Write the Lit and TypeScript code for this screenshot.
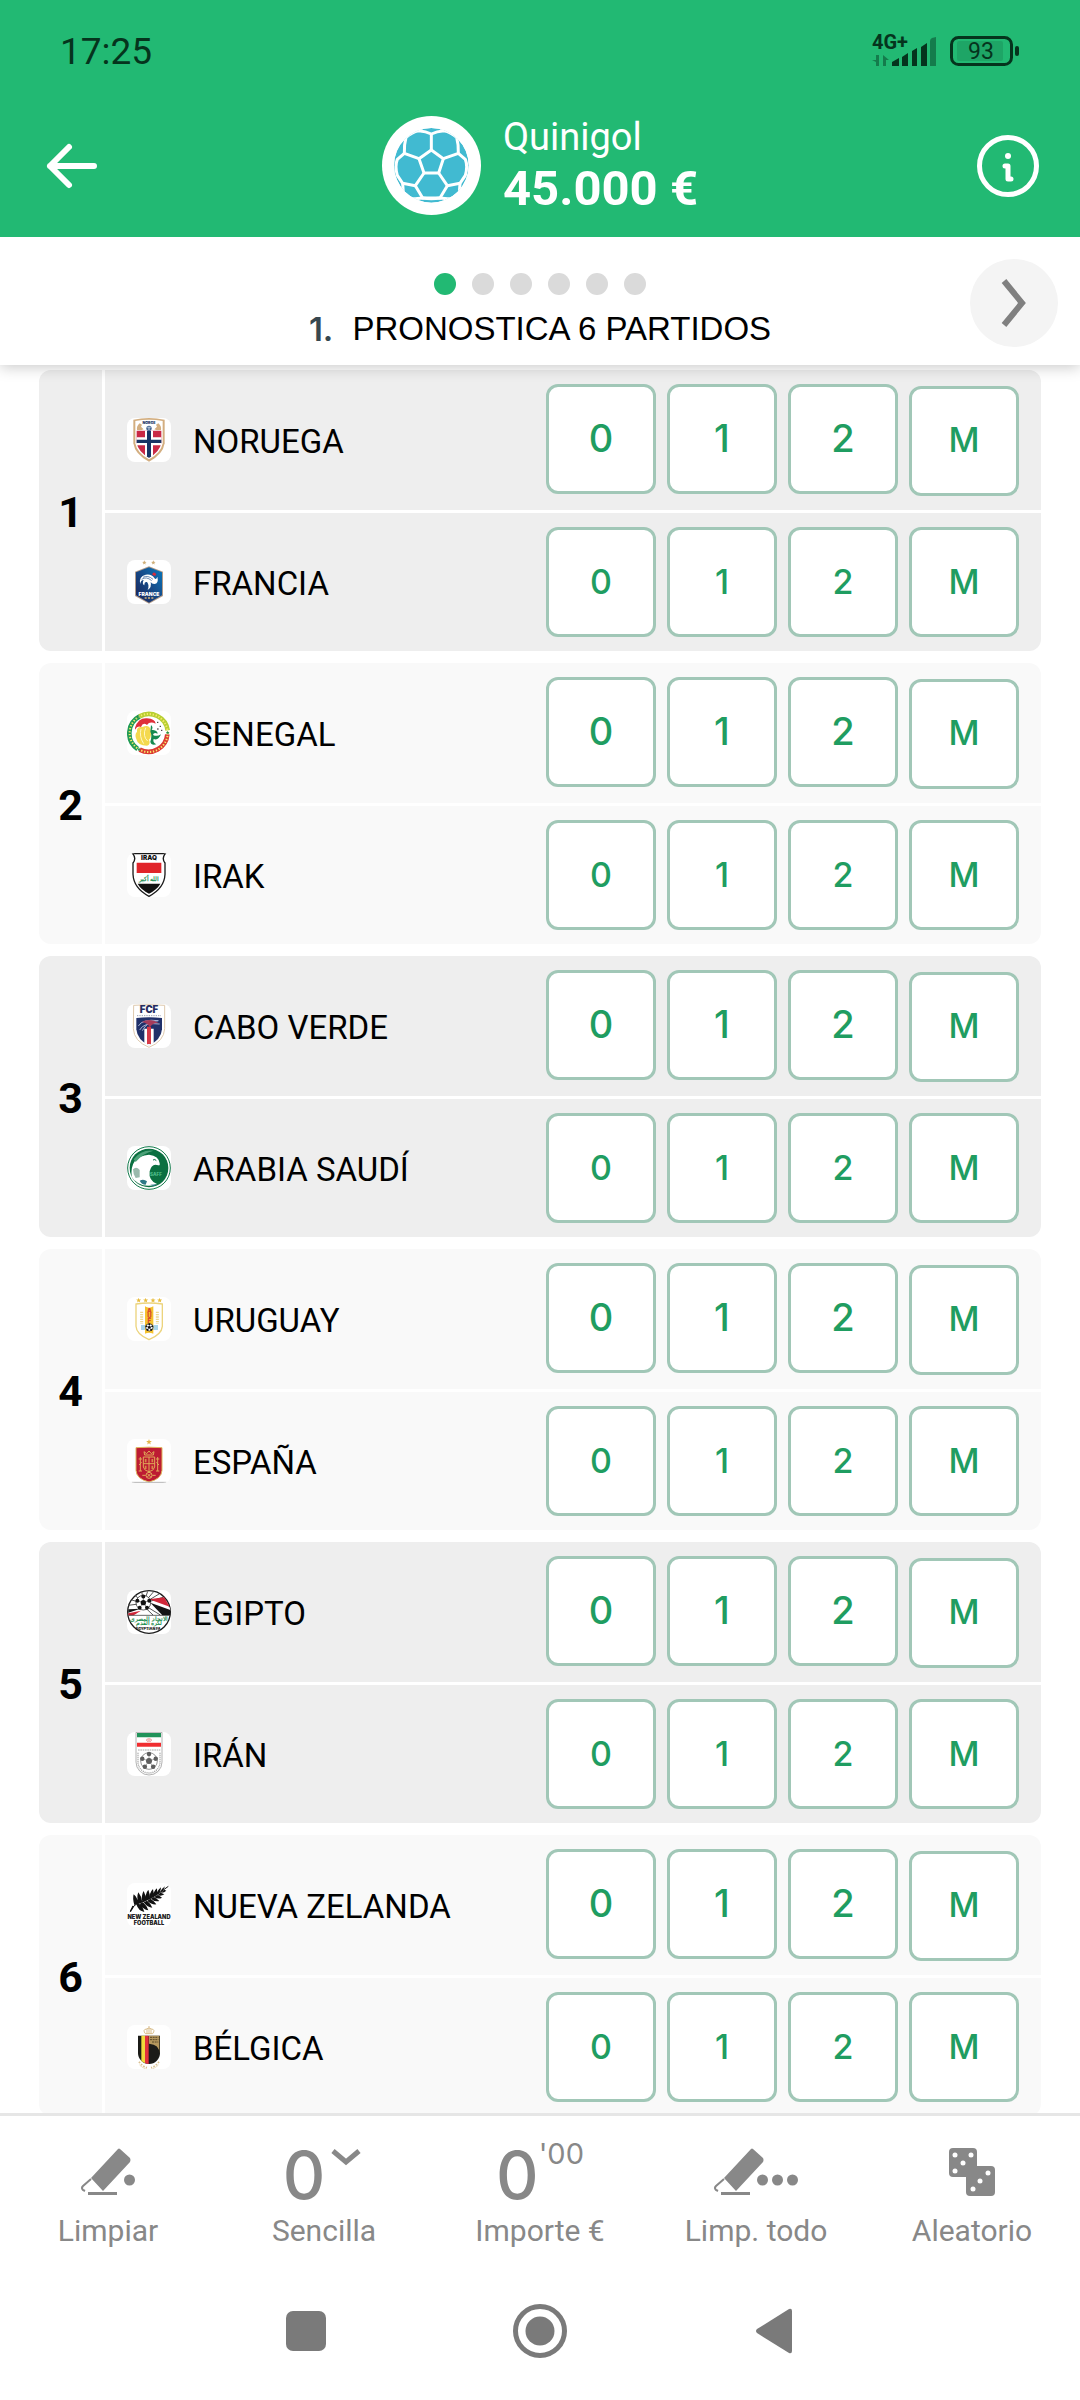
import { LitElement, html, svg, css, nothing, type SVGTemplateResult } from 'lit';
import { customElement, property, state } from 'lit/decorators.js';
import { classMap } from 'lit/directives/class-map.js';

interface Team {
  name: string;
  crest: string;
}

const MATCHES: [Team, Team][] = [
  [{ name: 'NORUEGA', crest: 'norway' }, { name: 'FRANCIA', crest: 'france' }],
  [{ name: 'SENEGAL', crest: 'senegal' }, { name: 'IRAK', crest: 'iraq' }],
  [{ name: 'CABO VERDE', crest: 'capeverde' }, { name: 'ARABIA SAUDÍ', crest: 'saudi' }],
  [{ name: 'URUGUAY', crest: 'uruguay' }, { name: 'ESPAÑA', crest: 'spain' }],
  [{ name: 'EGIPTO', crest: 'egypt' }, { name: 'IRÁN', crest: 'iran' }],
  [{ name: 'NUEVA ZELANDA', crest: 'newzealand' }, { name: 'BÉLGICA', crest: 'belgium' }],
];

const GOALS = ['0', '1', '2', 'M'];

// Five-pointed star centred on x, y
function star(x: number, y: number, r: number, fill: string): SVGTemplateResult {
  const points = Array.from({ length: 10 }, (_, i) => {
    const radius = i % 2 ? r * 0.42 : r;
    const angle = (Math.PI / 5) * i - Math.PI / 2;
    return `${(x + radius * Math.cos(angle)).toFixed(1)},${(y + radius * Math.sin(angle)).toFixed(1)}`;
  }).join(' ');
  return svg`<polygon points=${points} fill=${fill} />`;
}

// Small black and white football
function football(x: number, y: number, r: number, dark = '#111'): SVGTemplateResult {
  const spots = [0, 1, 2, 3, 4].map((i) => {
    const angle = ((Math.PI * 2) / 5) * i - Math.PI / 2;
    return [x + r * 0.85 * Math.cos(angle), y + r * 0.85 * Math.sin(angle)];
  });
  return svg`
    <circle cx=${x} cy=${y} r=${r} fill="#fff" stroke=${dark} stroke-width="2" />
    ${spots.map(([sx, sy]) => svg`
      <line x1=${x} y1=${y} x2=${sx} y2=${sy} stroke=${dark} stroke-width="1.5" />
      <circle cx=${sx} cy=${sy} r=${r * 0.27} fill=${dark} />`)}
    <circle cx=${x} cy=${y} r=${r * 0.36} fill=${dark} />
  `;
}

const CRESTS: Record<string, SVGTemplateResult> = {
  norway: svg`
    <path d="M19 5 Q66 -5 113 5 V76 Q108 110 66 131 Q24 110 19 76Z" fill="#d3ae80" />
    <path d="M25 9 Q66 1 107 9 V76 Q102 105 66 124 Q30 105 25 76Z" fill="#fff" />
    <path d="M29 38 H103 V75 Q98 102 66 119 Q34 102 29 75Z" fill="#c92845" />
    <path d="M54 38 H78 V113 L66 119 L54 113Z M29 58 H103 V82 H29Z" fill="#fff" />
    <path d="M60 38 H72 V116 L66 119 L60 116Z M29 65 H103 V75 H29Z" fill="#173465" />
    <path d="M30 36 Q28 24 38 16 L45 20 L42 26 L50 34 L42 37Z M102 36 Q104 24 94 16 L87 20 L90 26 L82 34 L90 37Z" fill="#d3ae80" />
    <text x="66" y="19" font-size="11" font-weight="900" text-anchor="middle" fill="#173465">NORGE</text>
    <circle cx="66" cy="31" r="8" fill="#3d5f8e" />
    <path d="M59 29 H73 M63 25 L69 37 M69 25 L63 37" stroke="#dce5ee" stroke-width="1.5" />`,
  france: svg`
    <defs>
      <linearGradient id="fr" x1="1" y1="0" x2="0" y2="1">
        <stop offset="0" stop-color="#0879bd" />
        <stop offset=".5" stop-color="#174987" />
        <stop offset="1" stop-color="#1b2154" />
      </linearGradient>
    </defs>
    ${star(52, 8, 7, '#cfae78')}${star(79, 8, 7, '#cfae78')}
    <path d="M66 19 L108 35 V108 L66 131 L24 108 V35Z" fill="#b39b89" />
    <path d="M66 22 L105 37 V106 L66 128 L27 106 V37Z" fill="url(#fr)" />
    <path d="M40 72 Q34 50 56 44 Q74 41 82 54 Q87 62 91 50 Q96 70 82 72 Q74 72 71 66 Q75 82 62 90 Q68 75 60 66 Q52 64 52 76 Q44 72 50 60 Q41 60 40 72Z" fill="#fff" />
    <path d="M44 58 Q58 48 74 62 M48 52 Q62 44 78 58" fill="none" stroke="#27558f" stroke-width="2" />
    <path d="M76 45 Q76 36 83 38 L88 42 L84 48Z" fill="#d62c3c" />
    <text x="66" y="107" font-size="15" font-weight="900" text-anchor="middle" fill="#fff">FRANCE</text>
    <path d="M53 114 H79" stroke="#cfae78" stroke-width="5" stroke-dasharray="6 4" />`,
  senegal: svg`
    <circle cx="65" cy="66" r="63" fill="#fff" />
    <path d="M32 114 A57 57 0 0 1 38 16" fill="none" stroke="#219b55" stroke-width="14" />
    <path d="M38 16 A57 57 0 0 1 122 58" fill="none" stroke="#b7cf32" stroke-width="14" />
    <path d="M121 70 A57 57 0 0 1 38 116" fill="none" stroke="#dc3a32" stroke-width="14" />
    <circle cx="65" cy="66" r="57" fill="none" stroke="#f6e96b" stroke-width="6" stroke-dasharray="4 5" />
    ${star(32, 18, 6, '#218f4d')}${star(122, 65, 6, '#218f4d')}${star(36, 115, 6, '#218f4d')}
    <path d="M24 50 Q34 20 60 22 Q85 24 86 38 Q68 30 60 42 Q48 32 42 48 Q32 42 24 56Z" fill="#df303a" />
    <path d="M30 62 Q28 46 46 48 Q66 40 70 54 Q76 76 66 86 Q72 100 60 104 Q32 104 28 84 Q22 70 30 62Z" fill="#f4d94e" />
    <path d="M42 54 Q36 76 50 98 M56 50 Q46 76 62 90" fill="none" stroke="#fff6c5" stroke-width="3" />
    <path d="M72 42 Q80 50 74 56 Q92 58 92 68 Q80 62 78 72 Q90 78 102 70 Q94 90 80 84 Q76 94 88 100 Q72 104 70 92 Q76 72 70 62Z" fill="#168a50" />
    <path d="M90 34 H94 M98 46 H102 M90 54 H95 M102 58 H106" stroke="#222" stroke-width="3" />`,
  iraq: svg`
    <path d="M17 2 H115 Q103 16 114 30 V64 Q112 106 66 130 Q20 106 18 64 V30 Q29 16 17 2Z" fill="#fff" stroke="#1b1b1b" stroke-width="4" />
    <text x="66" y="22" font-size="19" font-weight="900" text-anchor="middle" fill="#111">IRAQ</text>
    <path d="M29 29 H103 V60 H29Z" fill="#e1242a" />
    <text x="66" y="84" font-size="19" font-weight="700" text-anchor="middle" fill="#259058">الله أكبر</text>
    <path d="M32 92 H100 Q90 110 66 122 Q42 110 32 92Z" fill="#111" />`,
  capeverde: svg`
    <path d="M20 4 Q66 0 113 4 V74 Q111 112 66 130 Q21 112 19 74Z" fill="#fff" stroke="#dec9ae" stroke-width="3" />
    <text x="66" y="27" font-size="29" font-weight="900" text-anchor="middle" fill="#252e62">FCF</text>
    <path d="M30 35 H102" stroke="#9aa0b4" stroke-width="3" stroke-dasharray="4 3" />
    <path d="M28 42 Q66 38 105 42 V76 Q102 108 66 124 Q31 108 28 76Z" fill="#203069" />
    <path d="M52 74 H80 V118 L66 124 L52 118Z" fill="#fff" />
    <path d="M60 68 H72 V120 H60Z" fill="#d73a48" />
    <path d="M34 66 Q46 44 94 50 Q60 52 46 80 M38 78 Q50 54 98 60" fill="none" stroke="#a9b3d3" stroke-width="3" />
    <path d="M44 54 Q70 40 96 58 Q80 54 68 70 Q64 58 44 54Z" fill="#a43c5b" />`,
  saudi: svg`
    <circle cx="66" cy="66" r="64" fill="#fff" stroke="#11794a" stroke-width="3" />
    <circle cx="66" cy="66" r="58" fill="#0b7041" />
    <path d="M14 92 Q8 30 66 26 Q96 30 98 52 Q100 60 94 58 Q74 50 68 76 Q64 104 90 114 Q60 126 34 112 Q20 104 14 92Z" fill="#fff" />
    <path d="M20 40 Q42 10 80 14 Q50 20 26 48Z" fill="#4ca178" />
    <path d="M78 42 Q84 38 88 44" stroke="#0b7041" stroke-width="3" fill="none" />
    <path d="M18 70 Q28 60 38 72 L38 94 L26 96 Q18 84 18 70Z" fill="#9ab9ac" />
    <path d="M38 104 Q50 98 60 106 L56 116 Q44 116 38 104Z M70 116 L90 115 L80 121Z" fill="#2d7886" />
    <text x="87" y="89" font-size="14" font-weight="700" text-anchor="middle" fill="#55c28f">SAFF</text>`,
  uruguay: svg`
    ${[35, 56, 78, 98].map((x) => star(x, 10, 8, '#e8bd3e'))}
    <path d="M27 21 Q66 15 106 21 V88 Q104 112 66 128 Q28 112 27 88Z" fill="#fff" stroke="#ecd47d" stroke-width="4" />
    <path d="M44 44 V80 M91 44 V80" stroke="#ecd890" stroke-width="9" stroke-dasharray="4 3" />
    <path d="M42 84 H93 V99 H42Z" fill="#a7d5ec" />
    <path d="M54 28 Q66 36 79 28 V110 Q66 104 54 110Z" fill="#f5c22d" />
    <text font-size="18" font-weight="900" text-anchor="middle" fill="#d84a2b">
      <tspan x="67" y="48">A</tspan><tspan x="67" y="63">U</tspan><tspan x="67" y="78">F</tspan>
    </text>
    ${football(67, 91, 11)}`,
  spain: svg`
    ${star(66, 9, 9, '#e2b64c')}
    <path d="M27 26 Q66 23 105 26 V94 Q104 120 66 129 Q28 120 27 94Z" fill="#bd1c33" stroke="#dfb75f" stroke-width="3" />
    <g fill="none" stroke="#e0a958" stroke-width="3">
      <path d="M53 48 L51 38 L59 44 L66 36 L73 44 L81 38 L79 48Z" />
      <path d="M49 54 H83 V84 Q80 96 66 98 Q52 96 49 84Z M66 54 V96 M49 74 H83" />
      <path d="M40 54 V96 M92 54 V96 M35 60 H45 M87 60 H97 M35 96 H45 M87 96 H97 M36 78 L44 70 M88 70 L96 78" />
      <circle cx="66" cy="109" r="9" />
      <path d="M46 109 H56 M76 109 H86 M61 104 L71 114 M71 104 L61 114" />
    </g>
    <path d="M56 60 V70 M76 60 V70 M56 80 V90 M76 80 V90" stroke="#d98a4a" stroke-width="5" />
    <path d="M14 130 H118" stroke="#b5b5b5" stroke-width="3" />`,
  egypt: svg`
    <circle cx="66" cy="66" r="64" fill="#fff" stroke="#1c1c1c" stroke-width="4" />
    <path d="M50 40 L14 30 M50 40 L24 16 M50 40 L44 4 M50 40 L62 4 M50 40 L80 5 M50 40 L96 12 M50 40 L108 22 M50 40 L4 46 M56 54 L78 75 M66 54 L100 75" stroke="#555" stroke-width="3" />
    <path d="M66 28 L112 22 L128 50Z" fill="#d0283a" />
    <path d="M70 38 L128 52 L130 62Z" fill="#fff" />
    <path d="M70 38 L130 60 V76 H106Z" fill="#151515" />
    <path d="M40 56 L4 58 V68Z" fill="#151515" />
    <path d="M42 62 L4 70 L4 76 H20Z" fill="#d0283a" />
    ${football(49, 38, 22)}
    <path d="M5 76 H127" stroke="#1c1c1c" stroke-width="2" />
    <text x="66" y="92" font-size="17" font-weight="700" text-anchor="middle" fill="#1f8e52">الاتحاد المصرى</text>
    <text x="66" y="106" font-size="17" font-weight="700" text-anchor="middle" fill="#1f8e52">لكرة القدم</text>
    <text x="64" y="121" font-size="11" font-weight="900" text-anchor="middle" fill="#222">EGYPTIAN FA</text>`,
  iran: svg`
    <path d="M27 1 H105 V90 A39 39 0 0 1 27 90Z" fill="#fff" stroke="#8d8d8d" stroke-width="2" />
    <path d="M30 3 H102 V16 H30Z" fill="#21935a" />
    <path d="M30 32 H102 V44 H30Z" fill="#f02d30" />
    <path d="M61 20 Q57 25 62 29 M71 20 Q75 25 70 29 M66 18 V30" stroke="#e0373b" stroke-width="2" fill="none" />
    <path d="M33 54 H100" stroke="#a8a8a8" stroke-width="3" stroke-dasharray="5 2" />
    <path d="M33 62 V90 A33 33 0 0 0 99 90 V62" fill="none" stroke="#9b9b9b" stroke-width="4" stroke-dasharray="3 3" />
    ${football(66, 87, 25, '#5e5e5e')}`,
  newzealand: svg`
    <path d="M10 84 Q16 70 30 62 Q70 52 124 10" fill="none" stroke="#111" stroke-width="3" />
    <g fill="#111">
      <path d="M22 66 Q16 46 20 34 Q32 44 34 62Z M34 62 Q28 42 34 28 Q44 40 46 58Z M46 58 Q42 36 50 24 Q58 38 56 53Z M56 53 Q54 32 64 20 Q70 34 68 48Z M68 48 Q66 30 78 18 Q82 30 78 43Z M78 43 Q78 26 90 16 Q92 26 88 37Z M88 37 Q90 22 102 13 Q102 22 97 31Z M98 30 Q102 18 114 10 L108 23Z" />
      <path d="M28 64 Q34 84 52 87 Q48 70 36 62Z M38 62 Q48 80 64 82 Q58 66 48 58Z M50 58 Q62 74 76 74 Q70 60 60 53Z M61 53 Q74 66 88 64 Q80 52 70 47Z M72 47 Q84 58 97 54 Q88 45 80 42Z M82 42 Q94 50 105 44 Q96 37 90 36Z M92 36 Q102 41 112 34 Q104 29 100 29Z M101 29 Q110 31 118 23 L112 20Z" />
      <path d="M8 88 L16 68 L22 70 L12 86Z" />
    </g>
    <text x="66" y="109" font-size="17" font-weight="900" text-anchor="middle" fill="#222">NEW ZEALAND</text>
    <text x="66" y="125" font-size="17" font-weight="900" text-anchor="middle" fill="#222">FOOTBALL</text>`,
  belgium: svg`
    <path d="M55 26 Q46 14 58 12 Q66 6 74 12 Q86 14 77 26Z M66 3 V26 M60 12 V26 M72 12 V26" fill="none" stroke="#d9bd8b" stroke-width="3" />
    <path d="M33 32 H99 V84 A33 33 0 0 1 33 84Z" fill="#1b1b18" />
    <path d="M43 32 H54 V114 Q48 112 43 108Z" fill="#f0d93b" />
    <path d="M54 32 H65 V117 Q60 117 54 114Z" fill="#e3313c" />
    <path d="M66 32 H97 V86 Q98 58 66 56Z" fill="#b5975d" />
    <path d="M69 37 H94 M69 44 H94 M75 51 H94" stroke="#5b4a2b" stroke-width="3" stroke-dasharray="6 2" />
    <path d="M36 110 Q46 124 60 128 M96 110 Q86 124 72 128" fill="none" stroke="#d9c08f" stroke-width="5" stroke-dasharray="5 4" />
    <path d="M38 120 Q48 130 58 131 M94 120 Q84 130 74 131" fill="none" stroke="#d9c08f" stroke-width="3" stroke-dasharray="4 3" />`,
};

@customElement('team-crest')
export class TeamCrest extends LitElement {
  @property() team = '';

  static styles = css`
    :host {
      display: block;
      flex: none;
      width: 44px;
      height: 44px;
      border-radius: 8px;
      background: #fff;
      overflow: hidden;
    }

    svg {
      display: block;
      font-family: Inter, 'Noto Sans', sans-serif;
    }
  `;

  render() {
    return html`<svg width="44" height="44" viewBox="0 0 132 132" aria-hidden="true">${CRESTS[this.team] ?? nothing}</svg>`;
  }
}

@customElement('match-card')
export class MatchCard extends LitElement {
  @property({ type: Number }) number = 1;
  @property({ attribute: false }) teams: Team[] = [];
  @property({ type: Boolean }) shaded = false;

  @state() private picks: Record<number, string> = {};

  static styles = css`
    :host {
      display: block;
    }

    .card {
      display: grid;
      grid-template-columns: 63px 1fr;
      gap: 3px;
      border-radius: 12px;
      overflow: hidden;
      --card-color: #f9f9f9;
    }

    .card.shaded {
      --card-color: #eee;
    }

    .number {
      display: flex;
      align-items: center;
      justify-content: center;
      padding-top: 3px;
      background: var(--card-color);
      font-size: 43px;
      font-weight: 700;
    }

    .teams {
      display: grid;
      gap: 3px;
    }

    .team {
      display: flex;
      align-items: center;
      min-height: 138px;
      padding: 0 22px;
      gap: 22px;
      background: var(--card-color);
    }

    .team.home {
      min-height: 140px;
    }

    .name {
      flex: 1;
      padding-top: 3px;
      font-size: 33px;
      line-height: 40px;
    }

    .goals {
      display: flex;
      align-items: baseline;
      gap: 11px;
    }

    .goal {
      width: 110px;
      height: 110px;
      padding: 0 0 2px;
      border: 3px solid #a1c7b7;
      border-radius: 12px;
      background: #fff;
      color: #1f9d61;
      font-family: Inter, sans-serif;
      font-size: 34px;
      font-weight: 500;
      cursor: pointer;
    }

    .home .goal.digit {
      font-size: 38px;
    }

    .goal.picked {
      background: #1f9d61;
      color: #fff;
    }
  `;

  private pick(row: number, goal: string) {
    this.picks = { ...this.picks, [row]: this.picks[row] === goal ? '' : goal };
  }

  render() {
    return html`
      <div class=${classMap({ card: true, shaded: this.shaded })}>
        <div class="number">${this.number}</div>
        <div class="teams">
          ${this.teams.map((team, row) => html`
            <div class=${classMap({ team: true, home: row === 0 })} role="group" aria-label=${team.name}>
              <team-crest team=${team.crest}></team-crest>
              <span class="name">${team.name}</span>
              <div class="goals">
                ${GOALS.map((goal) => html`
                  <button
                    class=${classMap({ goal: true, digit: goal !== 'M', picked: this.picks[row] === goal })}
                    aria-pressed=${this.picks[row] === goal}
                    @click=${() => this.pick(row, goal)}
                  >${goal}</button>
                `)}
              </div>
            </div>
          `)}
        </div>
      </div>
    `;
  }
}

@customElement('app-root')
export class AppRoot extends LitElement {
  static styles = css`
    :host {
      display: flex;
      flex-direction: column;
      height: 100vh;
      background: #fff;
      color: #000;
      font-family: Roboto, sans-serif;
    }

    button {
      padding: 0;
      border: 0;
      background: none;
      color: inherit;
      font: inherit;
      cursor: pointer;
    }

    svg {
      display: block;
    }

    .header {
      position: relative;
      z-index: 2;
      flex: none;
      padding-bottom: 7px;
      background: #22b973;
      color: #fff;
    }

    .status {
      display: flex;
      align-items: center;
      justify-content: space-between;
      height: 102px;
      padding: 0 60px;
      color: #05341d;
    }

    .clock {
      font-size: 37px;
    }

    .title-bar {
      display: grid;
      grid-template-columns: 1fr auto 1fr;
      align-items: center;
      height: 128px;
      padding: 0 41px;
    }

    .info {
      justify-self: end;
    }

    .back {
      justify-self: start;
    }

    .brand {
      display: flex;
      align-items: center;
      gap: 22px;
      padding-bottom: 2px;
    }

    .game {
      margin: 0;
      font-size: 38px;
      font-weight: 400;
      line-height: 48px;
    }

    .prize {
      font-size: 49px;
      font-weight: 700;
      line-height: 56px;
    }

    .steps {
      position: relative;
      z-index: 1;
      flex: none;
      display: grid;
      grid-template-columns: 1fr auto 1fr;
      align-items: center;
      padding: 22px 22px 18px;
      box-shadow: 0 2px 14px rgba(0, 0, 0, 0.22);
      background: #fff;
    }

    .progress {
      grid-column: 2;
      align-self: end;
      display: flex;
      flex-direction: column;
      align-items: center;
      gap: 16px;
    }

    .dots {
      display: flex;
      gap: 16px;
    }

    .dot {
      width: 22px;
      height: 22px;
      border-radius: 50%;
      background: #dadada;
    }

    .dot.active {
      background: #22b973;
    }

    .step-title {
      display: flex;
      gap: 19px;
      margin: 0;
      font-family: 'Liberation Sans', sans-serif;
      font-size: 33px;
      font-weight: 400;
      line-height: 36px;
    }

    .step-number {
      color: #37474f;
      font-family: Inter, sans-serif;
      font-weight: 600;
    }

    .next {
      justify-self: end;
      display: grid;
      place-items: center;
      width: 88px;
      height: 88px;
      border-radius: 50%;
      background: #f4f4f4;
    }

    .matches {
      flex: 1;
      min-height: 0;
      overflow-y: auto;
      scrollbar-width: none;
      display: flex;
      flex-direction: column;
      gap: 12px;
      padding: 5px 39px 0;
    }

    .matches match-card {
      flex: none;
    }

    .toolbar {
      flex: none;
      display: grid;
      grid-template-columns: repeat(5, 1fr);
      border-top: 3px solid #e6e6e6;
      color: #888;
    }

    .tool {
      display: flex;
      flex-direction: column;
      align-items: center;
      gap: 14px;
      padding: 28px 0 14px;
      font-size: 30px;
      line-height: 34px;
    }

    .tool-icon {
      display: flex;
      align-items: center;
      height: 56px;
    }

    .amount {
      padding-top: 6px;
      font-family: Inter, sans-serif;
      font-size: 66px;
      font-weight: 500;
      line-height: 56px;
    }

    .cents {
      align-self: flex-start;
      font-family: Inter, sans-serif;
      font-size: 29px;
      line-height: 20px;
    }

    .caret {
      align-self: flex-start;
      padding: 4px 4px 0 6px;
    }

    .system-nav {
      flex: none;
      display: flex;
      justify-content: center;
      height: 138px;
    }

    .system-nav button {
      display: grid;
      place-items: center;
      width: 234px;
    }
  `;

  private renderStatus() {
    return html`
      <div class="status">
        <span class="clock">17:25</span>
        <svg width="150" height="46" viewBox="0 -6 150 46" fill="currentColor" font-family="Roboto, sans-serif">
          <text x="2" y="15" font-size="20" font-weight="700">4G+</text>
          <g opacity=".45">
            <path d="M9 21 V32 H6 V28 L2 26 H6 V21Z M13 32 V21 L19 26 H16 V32Z" />
            <path d="M60 7 Q60 5 62 4 L66 3 V32 H60Z" />
          </g>
          <path d="M22 32 V28 L29 24 V32Z M32 32 V23 L38 19 V32Z M42 32 V17 L47 14 V32Z M51 32 V13 L57 9 V32Z" />
          <rect x="87" y="7" width="46" height="20" rx="2" opacity=".14" />
          <rect x="81.500" y="3.500" width="60" height="27" rx="7" fill="none" stroke="currentColor" stroke-width="3" />
          <rect x="145" y="12" width="4" height="10" rx="2" />
          <text x="111" y="25" font-size="23" text-anchor="middle">93</text>
        </svg>
      </div>
    `;
  }

  private renderBall() {
    return svg`
      <svg width="99" height="99" viewBox="0 0 297 297" aria-hidden="true">
        <clipPath id="ball"><circle cx="148" cy="148" r="112" /></clipPath>
        <circle cx="148.500" cy="148.500" r="148.500" fill="#fff" />
        <g clip-path="url(#ball)">
          <circle cx="148" cy="148" r="112" fill="#41bad1" />
          <g fill="none" stroke="#fff" stroke-width="9" stroke-linejoin="round">
            <path d="M148 102 L184 128 L170 171 H126 L111 128Z" />
            <path d="M148 102 V54 M148 54 Q132 46 110 44 Q90 48 72 64 Q66 86 67 112 L111 128 M148 54 Q164 46 186 44 Q206 48 224 64 Q230 86 229 112 L184 128" />
            <path d="M67 112 L46 130 Q38 150 46 178 L62 202 L100 209 L126 171 M229 112 L250 130 Q258 150 250 178 L234 202 L196 209 L170 171" />
            <path d="M62 202 L64 230 L76 244 M234 202 L232 230 L220 244 M100 209 L122 246 H174 L196 209" />
            <path d="M76 248 H100 L122 246 Q148 250 174 246 L196 248 H220" />
            <path d="M110 44 L122 34 M186 44 L174 34" />
          </g>
        </g>
      </svg>
    `;
  }

  private renderEraser(dots: number) {
    return html`
      <svg width=${56 + (dots - 1) * 15} height="48" viewBox="0 0 ${56 + (dots - 1) * 15} 48" fill="currentColor" aria-hidden="true">
        <path d="M38 1 Q39 0 40 1 L50 10 Q51 12 50 14 L23 43 L11 30Z" />
        <path d="M11 31 L3 38 Q1 40 3 42 L5 43" fill="none" stroke="currentColor" stroke-width="2" />
        <path d="M8 44 H37 V47 H8Z" />
        ${Array.from({ length: dots }, (_, i) => svg`<circle cx=${49.5 + i * 15} cy="32" r="5.500" />`)}
      </svg>
    `;
  }

  private renderToolbar() {
    return html`
      <nav class="toolbar">
        <button class="tool">
          <span class="tool-icon">${this.renderEraser(1)}</span>
          Limpiar
        </button>
        <button class="tool">
          <span class="tool-icon">
            <span class="amount">0</span>
            <span class="caret">
              <svg width="30" height="18" viewBox="0 0 30 18" aria-hidden="true">
                <path d="M2 3 L15 14 L28 3" fill="none" stroke="currentColor" stroke-width="5" />
              </svg>
            </span>
          </span>
          Sencilla
        </button>
        <button class="tool">
          <span class="tool-icon">
            <span class="amount">0</span>
            <span class="cents">'00</span>
          </span>
          Importe €
        </button>
        <button class="tool">
          <span class="tool-icon">${this.renderEraser(3)}</span>
          Limp. todo
        </button>
        <button class="tool">
          <span class="tool-icon">
            <svg width="46" height="48" viewBox="0 0 46 48" aria-hidden="true">
              <rect width="28" height="29" rx="4" fill="currentColor" />
              <rect x="17" y="18" width="29" height="30" rx="4" fill="currentColor" />
              <g fill="#fff">
                <circle cx="6" cy="7" r="2.500" /><circle cx="22" cy="7" r="2.500" />
                <circle cx="14" cy="15" r="2.500" /><circle cx="6" cy="23" r="2.500" />
                <circle cx="39" cy="25" r="2.500" /><circle cx="31" cy="33" r="2.500" />
                <circle cx="24" cy="41" r="2.500" />
              </g>
            </svg>
          </span>
          Aleatorio
        </button>
      </nav>
    `;
  }

  render() {
    return html`
      <header class="header">
        ${this.renderStatus()}
        <div class="title-bar">
          <button class="back" aria-label="Volver">
            <svg width="62" height="62" viewBox="0 0 62 62" fill="none" stroke="#fff" stroke-width="6" stroke-linecap="round" stroke-linejoin="round">
              <path d="M28 12 L9 31 L28 50 M9 31 H53" />
            </svg>
          </button>
          <div class="brand">
            ${this.renderBall()}
            <div>
              <h1 class="game">Quinigol</h1>
              <div class="prize">45.000 €</div>
            </div>
          </div>
          <button class="info" aria-label="Información">
            <svg width="62" height="62" viewBox="0 0 62 62" fill="none" stroke="#fff" stroke-linecap="round" stroke-linejoin="round">
              <circle cx="31" cy="31" r="28.500" stroke-width="5" />
              <circle cx="31" cy="21" r="3" fill="#fff" stroke="none" />
              <path d="M28 31 H31 V44 H34" stroke-width="5" />
            </svg>
          </button>
        </div>
      </header>

      <section class="steps">
        <div class="progress">
          <div class="dots">
            ${[1, 2, 3, 4, 5, 6].map((step) => html`<span class=${classMap({ dot: true, active: step === 1 })}></span>`)}
          </div>
          <h2 class="step-title"><span class="step-number">1.</span> PRONOSTICA 6 PARTIDOS</h2>
        </div>
        <button class="next" aria-label="Siguiente">
          <svg width="40" height="56" viewBox="0 0 40 56" fill="none" stroke="#808080" stroke-width="6">
            <path d="M10 6 L28 28 L10 50" />
          </svg>
        </button>
      </section>

      <main class="matches">
        ${MATCHES.map((teams, i) => html`
          <match-card .number=${i + 1} .teams=${teams} ?shaded=${i % 2 === 0}></match-card>
        `)}
      </main>

      ${this.renderToolbar()}

      <nav class="system-nav">
        <button aria-label="Recientes">
          <svg width="40" height="40" viewBox="0 0 40 40"><rect width="40" height="40" rx="7" fill="#7a7a7a" /></svg>
        </button>
        <button aria-label="Inicio">
          <svg width="54" height="54" viewBox="0 0 54 54">
            <circle cx="27" cy="27" r="24.500" fill="none" stroke="#7a7a7a" stroke-width="5" />
            <circle cx="27" cy="27" r="14.500" fill="#7a7a7a" />
          </svg>
        </button>
        <button aria-label="Atrás">
          <svg width="38" height="48" viewBox="0 0 38 48">
            <path d="M2 22 L34 2 Q37 1 37 4 V44 Q37 47 34 46 L2 26 Q0 24 2 22Z" fill="#7a7a7a" />
          </svg>
        </button>
      </nav>
    `;
  }
}

declare global {
  interface HTMLElementTagNameMap {
    'team-crest': TeamCrest;
    'match-card': MatchCard;
    'app-root': AppRoot;
  }
}
